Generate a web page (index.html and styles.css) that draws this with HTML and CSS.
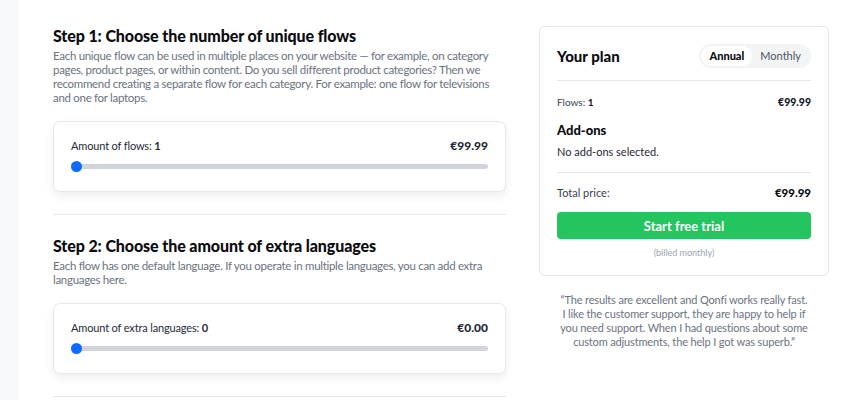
FILE: index.html
```html
<!DOCTYPE html>
<html lang="en">
<head>
<meta charset="utf-8">
<title>Pricing</title>
<link rel="stylesheet" href="styles.css">
</head>
<body>
<div class="page">
  <aside class="strip"></aside>
  <main class="main">
    <div class="steps">
      <section class="step">
        <h2 class="step-title">Step 1: Choose the number of unique flows</h2>
        <p class="step-text">Each unique flow can be used in multiple places on your website — for example, on category pages, product pages, or within content. Do you sell different product categories? Then we recommend creating a separate flow for each category. For example: one flow for televisions and one for laptops.</p>
        <div class="card">
          <div class="card-row">
            <span class="card-label">Amount of flows: <b>1</b></span>
            <span class="card-price">€99.99</span>
          </div>
          <div class="track"><span class="thumb"></span></div>
        </div>
      </section>
      <hr class="divider">
      <section class="step">
        <h2 class="step-title">Step 2: Choose the amount of extra languages</h2>
        <p class="step-text">Each flow has one default language. If you operate in multiple languages, you can add extra languages here.</p>
        <div class="card">
          <div class="card-row">
            <span class="card-label">Amount of extra languages: <b>0</b></span>
            <span class="card-price">€0.00</span>
          </div>
          <div class="track"><span class="thumb"></span></div>
        </div>
      </section>
      <hr class="divider">
    </div>
    <div class="side">
      <div class="plan">
        <div class="plan-head">
          <h3 class="plan-title">Your plan</h3>
          <div class="toggle">
            <span class="toggle-opt active">Annual</span>
            <span class="toggle-opt">Monthly</span>
          </div>
        </div>
        <hr class="plan-divider">
        <div class="plan-line small">
          <span>Flows: <b>1</b></span>
          <b class="plan-amount">€99.99</b>
        </div>
        <h4 class="addons-title">Add-ons</h4>
        <p class="addons-text">No add-ons selected.</p>
        <hr class="plan-divider">
        <div class="plan-line total">
          <span>Total price:</span>
          <b class="plan-amount big">€99.99</b>
        </div>
        <button class="cta">Start free trial</button>
        <p class="billed">(billed monthly)</p>
      </div>
      <p class="quote">“The results are excellent and Qonfi works really fast. I like the customer support, they are happy to help if you need support. When I had questions about some custom adjustments, the help I got was superb.”</p>
    </div>
  </main>
</div>
</body>
</html>
```
FILE: styles.css
```css
* { box-sizing: border-box; }
html, body { margin: 0; padding: 0; }
body {
  font-family: Lato, "Open Sans", sans-serif;
  color: #111827;
  background: #fff;
}
.page {
  display: flex;
  height: 400px;
  overflow: hidden;
}
.strip {
  width: 19px;
  flex: none;
  background: #f8f9fa;
}
.main {
  display: flex;
  gap: 33px;
  padding: 25px 0 0 34px;
}
.steps {
  width: 453px;
  flex: none;
}
.step-title {
  margin: 0;
  font-size: 16px;
  line-height: 22px;
  font-weight: 900;
  letter-spacing: -0.1px;
  color: #0b0b0f;
}
.step-text {
  margin: 2px 0 0;
  font-size: 11.5px;
  line-height: 14px;
  letter-spacing: -0.3px;
  color: #6b7280;
}
.card {
  margin-top: 16px;
  border: 1px solid #e7e8eb;
  border-radius: 7px;
  background: #fff;
  box-shadow: 0 4px 10px rgba(0,0,0,0.07);
  padding: 15px 17px 22px;
  height: 71px;
}
.card-row {
  display: flex;
  justify-content: space-between;
  align-items: center;
  height: 16px;
  font-size: 11px;
  color: #1f2937;
}
.card-label { letter-spacing: -0.15px; }
.card-label b { font-weight: 700; }
.card-price {
  font-size: 12px;
  font-weight: 900;
  color: #1f2937;
}
.track {
  position: relative;
  margin-top: 11px;
  height: 5px;
  border-radius: 3px;
  background: #d1d5db;
}
.thumb {
  position: absolute;
  left: 0;
  top: -3px;
  width: 11px;
  height: 11px;
  border-radius: 50%;
  background: #0b6cff;
}
.divider {
  margin: 22px 0 20px;
  border: 0;
  border-top: 1px solid #e8e9ec;
}
.side {
  width: 290px;
  flex: none;
  padding-top: 1px;
}
.plan {
  border: 1px solid #e5e7eb;
  border-radius: 6px;
  padding: 17px 17px 15px;
}
.plan-head {
  display: flex;
  justify-content: space-between;
  align-items: center;
  height: 24px;
}
.plan-title {
  margin: 0;
  font-size: 15px;
  font-weight: 900;
  color: #0b0b0f;
}
.toggle {
  display: flex;
  align-items: center;
  height: 24px;
  padding: 2px;
  border-radius: 12px;
  background: #f3f4f6;
}
.toggle-opt {
  height: 20px;
  line-height: 20px;
  padding: 0 8px;
  border-radius: 10px;
  font-size: 11px;
  color: #4b5563;
}
.toggle-opt.active {
  background: #fff;
  font-weight: 900;
  color: #0b0b0f;
}
.plan-divider {
  margin: 12px 0 0;
  border: 0;
  border-top: 1px solid #e5e7eb;
}
.plan-line {
  display: flex;
  justify-content: space-between;
  align-items: center;
}
.plan-line.small {
  margin-top: 13px;
  height: 16px;
  font-size: 10px;
  color: #374151;
}
.plan-line.small b { color: #111827; }
.plan-amount {
  font-size: 10.5px;
  font-weight: 900;
  color: #0b0b0f;
}
.plan-amount.big { font-size: 11.5px; }
.addons-title {
  margin: 11px 0 0;
  font-size: 13px;
  line-height: 18px;
  font-weight: 900;
  color: #0b0b0f;
}
.addons-text {
  margin: 5px 0 0;
  font-size: 11px;
  line-height: 16px;
  color: #1f2937;
}
.plan-line.total {
  margin-top: 11px;
  height: 16px;
  font-size: 11px;
  color: #374151;
}
.cta {
  display: block;
  width: 100%;
  margin-top: 12px;
  height: 27px;
  border: 0;
  border-radius: 4px;
  background: #22c55e;
  color: #fff;
  font-family: inherit;
  font-size: 13px;
  font-weight: 700;
}
.billed {
  margin: 7px 0 0;
  text-align: center;
  font-size: 9px;
  line-height: 14px;
  color: #9ca3af;
}
.quote {
  margin: 17px 0 0;
  padding: 0 19px;
  text-align: center;
  font-size: 11px;
  line-height: 14px;
  letter-spacing: -0.15px;
  color: #6b7280;
}
```
